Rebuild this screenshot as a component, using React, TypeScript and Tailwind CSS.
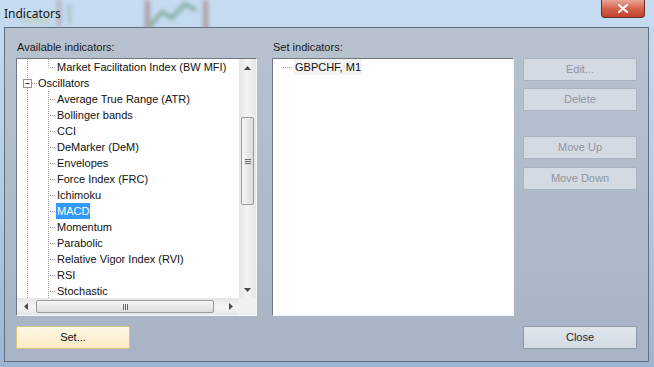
import React from 'react'

type Row = { text: string; kind: 'child' | 'lastChild' | 'root'; selected?: boolean }

const rows: Row[] = [
  { text: 'Market Facilitation Index (BW MFI)', kind: 'lastChild' },
  { text: 'Oscillators', kind: 'root' },
  { text: 'Average True Range (ATR)', kind: 'child' },
  { text: 'Bollinger bands', kind: 'child' },
  { text: 'CCI', kind: 'child' },
  { text: 'DeMarker (DeM)', kind: 'child' },
  { text: 'Envelopes', kind: 'child' },
  { text: 'Force Index (FRC)', kind: 'child' },
  { text: 'Ichimoku', kind: 'child' },
  { text: 'MACD', kind: 'child', selected: true },
  { text: 'Momentum', kind: 'child' },
  { text: 'Parabolic', kind: 'child' },
  { text: 'Relative Vigor Index (RVI)', kind: 'child' },
  { text: 'RSI', kind: 'child' },
  { text: 'Stochastic', kind: 'child' },
]

const DOT = '#a5a5a5'

// tree connector lines for one 16px row
function Gutter({ kind }: { kind: Row['kind'] }) {
  if (kind === 'root') {
    return (
      <svg width="20" height="16" className="shrink-0">
        <line x1="10.5" y1="0" x2="10.5" y2="4" stroke={DOT} strokeDasharray="1 1" />
        <line x1="10.5" y1="13" x2="10.5" y2="16" stroke={DOT} strokeDasharray="1 1" />
        <rect x="6.5" y="4.5" width="8" height="8" fill="#ffffff" stroke="#919191" />
        <line x1="8.5" y1="8.5" x2="12.5" y2="8.5" stroke="#222" />
        <line x1="15" y1="8.5" x2="20" y2="8.5" stroke={DOT} strokeDasharray="1 1" />
      </svg>
    )
  }
  return (
    <svg width="39" height="16" className="shrink-0">
      <line x1="10.5" y1="0" x2="10.5" y2="16" stroke={DOT} strokeDasharray="1 1" />
      <line x1="31.5" y1="0" x2="31.5" y2={kind === 'lastChild' ? 9 : 16} stroke={DOT} strokeDasharray="1 1" />
      <line x1="33" y1="8.5" x2="39" y2="8.5" stroke={DOT} strokeDasharray="1 1" />
    </svg>
  )
}

function Arrow({ dir }: { dir: 'up' | 'down' | 'left' | 'right' }) {
  const pts = {
    up: '0,4 3.5,0 7,4',
    down: '0,0 3.5,4 7,0',
    left: '4,0 0,3.5 4,7',
    right: '0,0 4,3.5 0,7',
  }[dir]
  const v = dir === 'up' || dir === 'down'
  return (
    <svg width={v ? 7 : 4} height={v ? 4 : 7}>
      <polygon points={pts} fill="#4a4a4a" />
    </svg>
  )
}

function VScroll() {
  return (
    <div className="w-[17px] flex flex-col bg-gradient-to-r from-[#e6e6e6] via-[#f4f4f4] to-[#e6e6e6]">
      <div className="h-[17px] flex items-center justify-center">
        <Arrow dir="up" />
      </div>
      <div className="flex-1 pt-[41px] px-[2px]">
        <div className="h-[88px] rounded-[2px] border border-[#9a9a9a] bg-gradient-to-r from-[#f6f6f6] to-[#dcdcdc] flex flex-col items-center justify-center gap-[1px]">
          <div className="w-[6px] h-[1px] bg-[#6a6a6a]" />
          <div className="w-[6px] h-[1px] bg-[#6a6a6a]" />
          <div className="w-[6px] h-[1px] bg-[#6a6a6a]" />
        </div>
      </div>
      <div className="h-[17px] flex items-center justify-center">
        <Arrow dir="down" />
      </div>
    </div>
  )
}

function HScroll() {
  return (
    <div className="h-[17px] flex bg-gradient-to-b from-[#e6e6e6] via-[#f4f4f4] to-[#e6e6e6]">
      <div className="w-[17px] flex items-center justify-center">
        <Arrow dir="left" />
      </div>
      <div className="flex-1 py-[2px] pl-[2px]">
        <div className="w-[178px] h-full rounded-[2px] border border-[#9a9a9a] bg-gradient-to-b from-[#f6f6f6] to-[#dcdcdc] flex items-center justify-center gap-[1px]">
          <div className="w-[1px] h-[6px] bg-[#6a6a6a]" />
          <div className="w-[1px] h-[6px] bg-[#6a6a6a]" />
          <div className="w-[1px] h-[6px] bg-[#6a6a6a]" />
        </div>
      </div>
      <div className="w-[17px] flex items-center justify-center">
        <Arrow dir="right" />
      </div>
      <div className="w-[17px] bg-[#f0f0f0]" />
    </div>
  )
}

function Button({ label, disabled, variant }: { label: string; disabled?: boolean; variant?: 'default' }) {
  let cls = 'bg-gradient-to-b from-[#e0e5eb] to-[#d4dbe3] border-[#8f99a6] text-[#1c2530]'
  if (disabled) cls = 'bg-[#d4dae2] border-[#abb3bd] text-[#8e959e]'
  if (variant === 'default') cls = 'bg-gradient-to-b from-[#fef7e4] to-[#fcecc4] border-[#dfc27e] text-[#111111]'
  return (
    <div className={`h-[23px] w-[114px] border rounded-[1px] flex items-center justify-center text-[11px] ${cls}`}>
      {label}
    </div>
  )
}

export default function App() {
  return (
    <div
      className="w-[654px] h-[367px] overflow-hidden flex flex-col bg-gradient-to-b from-[#c6dcf2] via-[#b4cce6] to-[#9db5d1] relative"
      style={{ fontFamily: '"Liberation Sans", Arial, sans-serif' }}
    >
      {/* blurred chart seen through the glass title bar */}
      <svg className="absolute left-0 top-0" width="654" height="28">
        <defs>
          <filter id="blur">
            <feGaussianBlur stdDeviation="2" />
          </filter>
        </defs>
        <g filter="url(#blur)" opacity="0.6">
          <rect x="57" y="0" width="4" height="26" fill="#b08a8a" />
          <rect x="68" y="4" width="3" height="20" fill="#9aa79a" />
          <rect x="145" y="0" width="5" height="30" fill="#a07272" />
          <polyline points="150,26 162,12 172,18 185,4 196,10" stroke="#5a8f64" strokeWidth="4" fill="none" />
          <rect x="203" y="0" width="5" height="30" fill="#a07272" />
          <rect x="20" y="14" width="30" height="10" fill="#c0d0c0" />
        </g>
      </svg>

      {/* title bar */}
      <div className="h-[27px] shrink-0 relative">
        <span
          className="absolute left-[4px] top-[5px] text-[12px] text-[#101820]"
          style={{ fontFamily: '"Noto Sans", "Open Sans", sans-serif' }}
        >
          Indicators
        </span>
        <div className="absolute left-[601px] top-0 w-[44px] h-[18px] rounded-b-[4px] border border-t-0 border-[#6b2b22] bg-gradient-to-b from-[#e9a696] via-[#d4624d] to-[#c2402a] flex items-center justify-center">
          <svg width="10" height="9">
            <path d="M1 1 L9 8 M9 1 L1 8" stroke="#ffffff" strokeWidth="2.2" strokeLinecap="round" />
          </svg>
        </div>
      </div>

      {/* client area */}
      <div className="ml-[4px] mr-[5px] mb-[5px] flex-1 border border-[#5f7086] bg-gradient-to-b from-[#b8c2cf] to-[#a8b4c5] pl-[11px] pt-[11px] flex flex-col">
        <div className="flex">
          {/* available */}
          <div className="w-[241px] flex flex-col">
            <div className="h-[16px] leading-[16px] text-[11px] text-[#1a1a1a] pl-[1px] mb-[3px]">Available indicators:</div>
            <div className="h-[258px] border border-t-[#6e7783] border-l-[#6e7783] border-r-[#f4f6f8] border-b-[#f4f6f8] bg-white flex flex-col">
              <div className="flex-1 flex min-h-0">
                <div className="flex-1 overflow-hidden">
                  {rows.map((r) => (
                    <div key={r.text} className="h-[16px] flex items-stretch">
                      <Gutter kind={r.kind} />
                      <span
                        className={`px-[1px] leading-[16px] text-[11px] whitespace-nowrap ${
                          r.selected ? 'bg-[#3399ff] text-white' : 'text-[#111111]'
                        }`}
                      >
                        {r.text}
                      </span>
                    </div>
                  ))}
                </div>
                <VScroll />
              </div>
              <HScroll />
            </div>
          </div>

          {/* set indicators */}
          <div className="w-[242px] ml-[15px] flex flex-col">
            <div className="h-[16px] leading-[16px] text-[11px] text-[#1a1a1a] pl-[1px] mb-[3px]">Set indicators:</div>
            <div className="h-[258px] border border-t-[#6e7783] border-l-[#6e7783] border-r-[#f4f6f8] border-b-[#f4f6f8] bg-white pl-[10px]">
              <div className="h-[16px] flex items-stretch">
                <svg width="11" height="16" className="shrink-0">
                  <line x1="0" y1="8.5" x2="10" y2="8.5" stroke={DOT} strokeDasharray="1 1" />
                </svg>
                <span className="px-[1px] leading-[16px] text-[11px] text-[#111111] bg-[#f2f2f2]">GBPCHF, M1</span>
              </div>
            </div>
          </div>

          {/* buttons */}
          <div className="ml-[9px] pt-[19px] flex flex-col">
            <Button label="Edit..." disabled />
            <div className="h-[7px]" />
            <Button label="Delete" disabled />
            <div className="h-[25px]" />
            <Button label="Move Up" disabled />
            <div className="h-[8px]" />
            <Button label="Move Down" disabled />
          </div>
        </div>

        <div className="flex justify-between mt-[10px] pr-[11px]">
          <Button label="Set..." variant="default" />
          <Button label="Close" />
        </div>
      </div>
    </div>
  )
}
